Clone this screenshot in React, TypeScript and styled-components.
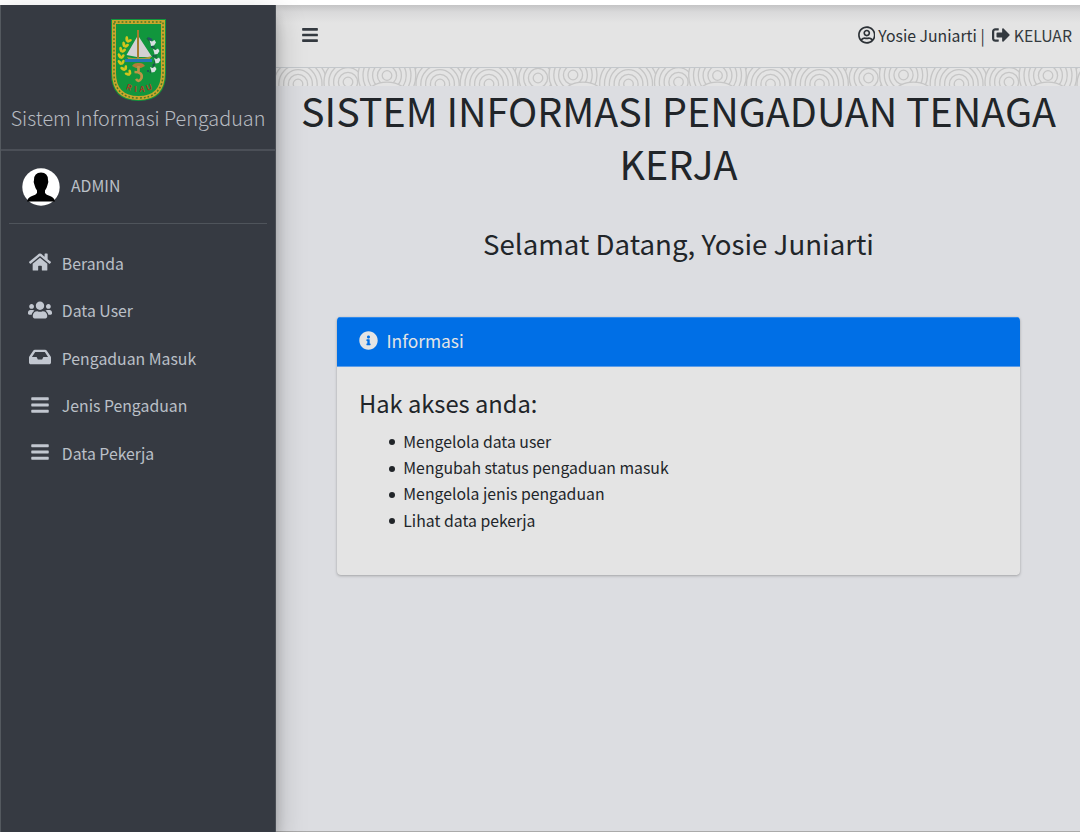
import React from "react";
import styled, { createGlobalStyle } from "styled-components";
import { FaHome, FaUsers, FaInbox, FaBars, FaInfoCircle, FaSignOutAlt, FaRegUserCircle } from "react-icons/fa";

const Global = createGlobalStyle`
  *{box-sizing:border-box}
  html,body{margin:0;padding:0;background:#fff}
  body{font-family:"Noto Sans CJK SC","Noto Sans",sans-serif;font-size:15.8px;color:#212529;overflow:hidden}
  h1,h2,h3,ul,p{margin:0;font-weight:400}
`;
const Page = styled.div`display:flex;height:832px;padding-top:5px;overflow:hidden;`;
const Sidebar = styled.aside`
  width:276px;flex:none;background:#363a42;color:#bbc0c8;border-left:1px solid #54595f;border-right:1px solid #4a4e55;
  box-shadow:0 12px 28px rgba(0,0,0,.25),0 10px 10px rgba(0,0,0,.16);z-index:2;display:flex;flex-direction:column;position:relative;
`;
const Brand = styled.div`
  height:146px;border-bottom:2px solid #4b4f57;display:flex;flex-direction:column;align-items:center;padding:13px 0 0 0;gap:1px;
`;
const BrandName = styled.div`font-size:19.8px;line-height:30px;white-space:nowrap;color:#b6bac1;font-weight:300;`;
const UserPanel = styled.div`
  margin:0 8px;height:73px;border-bottom:1px solid #4f545b;display:flex;align-items:center;padding:0 0 1px 13px;gap:11px;
`;
const UserName = styled.span`padding-bottom:2px;`;
const Nav = styled.nav`margin-top:15.700px;`;
const NavItem = styled.a`
  height:47.5px;display:flex;align-items:center;padding-left:25.500px;gap:8.300px;
`;
const NavIcon = styled.span`width:27px;display:flex;justify-content:center;margin-top:-2px;color:#c2c7d0;`;
const Main = styled.main`flex:1;min-width:0;background:#dcdde1;display:flex;flex-direction:column;border-bottom:1px solid #aaa;`;
const Topbar = styled.header`
  height:63px;background:linear-gradient(#c4c4c5,#d9d9da 7px,#e4e4e4 18px);border-bottom:1px solid #c3c7cb;
  display:flex;align-items:center;padding:0 8px 2px 25px;color:#343a40;
`;
const Account = styled.div`margin-left:auto;display:flex;align-items:center;white-space:nowrap;`;
const UserLink = styled.span`display:flex;align-items:center;gap:3px;width:127px;margin-right:7px;color:#2c3136;`;
const Logout = styled.span`display:flex;align-items:center;gap:4px;`;
const PatternStrip = styled.svg`display:block;flex:none;`;
const Title = styled.h1`font-size:39.45px;line-height:53px;text-align:center;margin-top:-3px;padding-left:1px;`;
const Welcome = styled.h2`font-size:27.65px;line-height:34px;text-align:center;margin-top:37px;padding-left:1px;`;
const Card = styled.section`
  margin:56.5px 60.5px 0 61px;height:258px;background:#e4e4e4;border-radius:4px;overflow:hidden;
  box-shadow:0 0 1px rgba(0,0,0,.15),0 1px 3px rgba(0,0,0,.25);
`;
const CardHead = styled.div`
  height:50px;background:#006fe6;color:#e4e4e4;font-size:17.400px;display:flex;align-items:center;padding:0 22px 3px;gap:8.500px;
  border-top:1px solid #328bec;border-bottom:1px solid #5c9de8;
`;
const CardTitle = styled.h3`font-size:23.7px;line-height:30px;padding:21.5px 22px 0;`;
const Rights = styled.ul`padding:10.500px 0 0 52px;line-height:26.4px;list-style:none;`;
const Right = styled.li`
  display:flex;align-items:center;gap:8.3px;
  &::before{content:"";width:6px;height:6px;border-radius:50%;background:#212529;margin-top:1px;}
`;

const rings = [
  { x: 22, y: 84, n: 6 }, { x: 72, y: 82, n: 5 }, { x: 164, y: 84, n: 6 }, { x: 262, y: 78, n: 5 },
  { x: 213, y: 84, n: 6 }, { x: 297, y: 75, n: 5 }, { x: 111, y: 75.5, n: 6 },
  { x: 111, y: 111, n: 6 }, { x: 307, y: 111, n: 6 },
];
const Pattern = () => (
  <PatternStrip width="804" height="18" viewBox="0 68 804 18">
    <rect y="68" width="804" height="18" fill="#e4e4e4" />
    {[-330.5, 0, 330.5, 661].map(dx => rings.map((r, i) => (
      <g key={`${dx}-${i}`} fill="none" stroke="#c6c6c6" strokeWidth="1.3">
        <circle cx={r.x + dx} cy={r.y} r={r.n * 4.8} fill="#e4e4e4" />
        {Array.from({ length: r.n - 1 }, (_, k) => <circle key={k} cx={r.x + dx} cy={r.y} r={4.8 * (k + 1)} />)}
      </g>
    )))}
  </PatternStrip>
);
const grains = [[34, 21, 30], [31, 26, 20], [28, 31, 15], [26.5, 37, 5], [26.5, 43, -10], [29, 49, -30], [33, 54, -45]];
const Crest = () => (
  <svg width="57" height="84" viewBox="0 0 57 84">
    <path d="M1 1H56V55Q56 83 28.500 83Q1 83 1 55Z" fill="#11963d" />
    <path d="M4 4H53V55Q53 80 28.500 80Q4 80 4 55Z" fill="none" stroke="#c9a52c" strokeWidth="4" />
    <path d="M4 4H53V55Q53 80 28.500 80Q4 80 4 55Z" fill="none" stroke="#4c7a24" strokeWidth="1.500" strokeDasharray="1.800 2" />
    <g fill="#d3c51c">
      {grains.map(([x, y, a], i) => (
        <g key={i} transform={`translate(${x - 15} ${y}) rotate(${a})`}>
          <ellipse cx="-2.200" cy="0" rx="1.500" ry="2.900" transform="rotate(-30)" />
          <ellipse cx="1.800" cy="0.500" rx="1.400" ry="2.700" transform="rotate(35)" />
        </g>
      ))}
    </g>
    <path d="M37 20Q53 35 40 55" fill="none" stroke="#176b3a" strokeWidth="2" />
    <path d="M38 20l4 2" stroke="#28536a" strokeWidth="2" />
    <g fill="#d8e2e2">
      {[[42.5, 24.5], [46, 33], [47, 42], [43, 51]].map(([x, y]) => (
        <path key={y} d={`M${x - 3} ${y - 2}l2.500 1 2.500-1.500 1.500 2.500-2 3-3 .5-.5-2.500z`} />
      ))}
    </g>
    <g fill="#1c4b5b"><circle cx="42" cy="29" r="1" /><circle cx="43.500" cy="38" r="1" /><circle cx="43.500" cy="47" r="1" /><circle cx="38" cy="53" r="1" /></g>
    <path d="M27 19L16.500 37L27 39Z M29 19L42 39H29Z" fill="#d3d1d3" />
    <path d="M28 12V41" stroke="#b9782c" strokeWidth="1.800" />
    <path d="M17 39Q29 42 42 38L39 42H19Z" fill="#a69a3c" />
    <path d="M15 42.500H42" stroke="#2377b5" strokeWidth="3" />
    <path d="M22 48Q24 44.500 28.500 45Q33 44.500 35 48L31 50H26Z" fill="#b37b38" />
    <path d="M28.500 48V55M24.500 54Q33 54 31.500 60Q29 65 26 61" fill="none" stroke="#bd9445" strokeWidth="2.700" />
    <g fill="#a83a25" fontSize="8" fontWeight="700" textAnchor="middle">
      <text x="18" y="72" transform="rotate(20 18 72)">R</text><text x="25.500" y="74">I</text><text x="32" y="74">A</text><text x="40" y="72" transform="rotate(-20 40 72)">U</text>
    </g>
  </svg>
);
const Avatar = () => (
  <svg width="38" height="38" viewBox="0 0 38 38">
    <circle cx="19" cy="19" r="18.700" fill="#fff" />
    <path d="M12 12Q12 4.500 19 4.500Q26 4.500 26 12Q27 14 25.500 17Q24.500 21 23 22.500V25Q24 27 28 28Q32.500 29.500 33 33.500H5Q5.500 29.500 10 28Q14 27 15 25V22.500Q13.500 21 12.500 17Q11 14 12 12Z" fill="#000" />
  </svg>
);
const items = [
  { icon: <FaHome size={22} />, label: "Beranda" },
  { icon: <FaUsers size={24} />, label: "Data User" },
  { icon: <FaInbox size={22} />, label: "Pengaduan Masuk" },
  { icon: <FaBars size={20} />, label: "Jenis Pengaduan" },
  { icon: <FaBars size={20} />, label: "Data Pekerja" },
];
const rights = ["Mengelola data user", "Mengubah status pengaduan masuk", "Mengelola jenis pengaduan", "Lihat data pekerja"];

export default function App() {
  return (
    <>
      <Global />
      <Page>
        <Sidebar>
          <Brand><Crest /><BrandName>Sistem Informasi Pengaduan</BrandName></Brand>
          <UserPanel><Avatar /><UserName>ADMIN</UserName></UserPanel>
          <Nav>{items.map(i => <NavItem key={i.label}><NavIcon>{i.icon}</NavIcon>{i.label}</NavItem>)}</Nav>
        </Sidebar>
        <Main>
          <Topbar>
            <FaBars size={18} />
            <Account>
              <UserLink><FaRegUserCircle size={18} /><span>Yosie Juniarti |</span></UserLink>
              <Logout><FaSignOutAlt size={18} /><span>KELUAR</span></Logout>
            </Account>
          </Topbar>
          <Pattern />
          <Title>SISTEM INFORMASI PENGADUAN TENAGA KERJA</Title>
          <Welcome>Selamat Datang, Yosie Juniarti</Welcome>
          <Card>
            <CardHead><FaInfoCircle size={19} />Informasi</CardHead>
            <CardTitle>Hak akses anda:</CardTitle>
            <Rights>{rights.map(r => <Right key={r}>{r}</Right>)}</Rights>
          </Card>
        </Main>
      </Page>
    </>
  );
}
